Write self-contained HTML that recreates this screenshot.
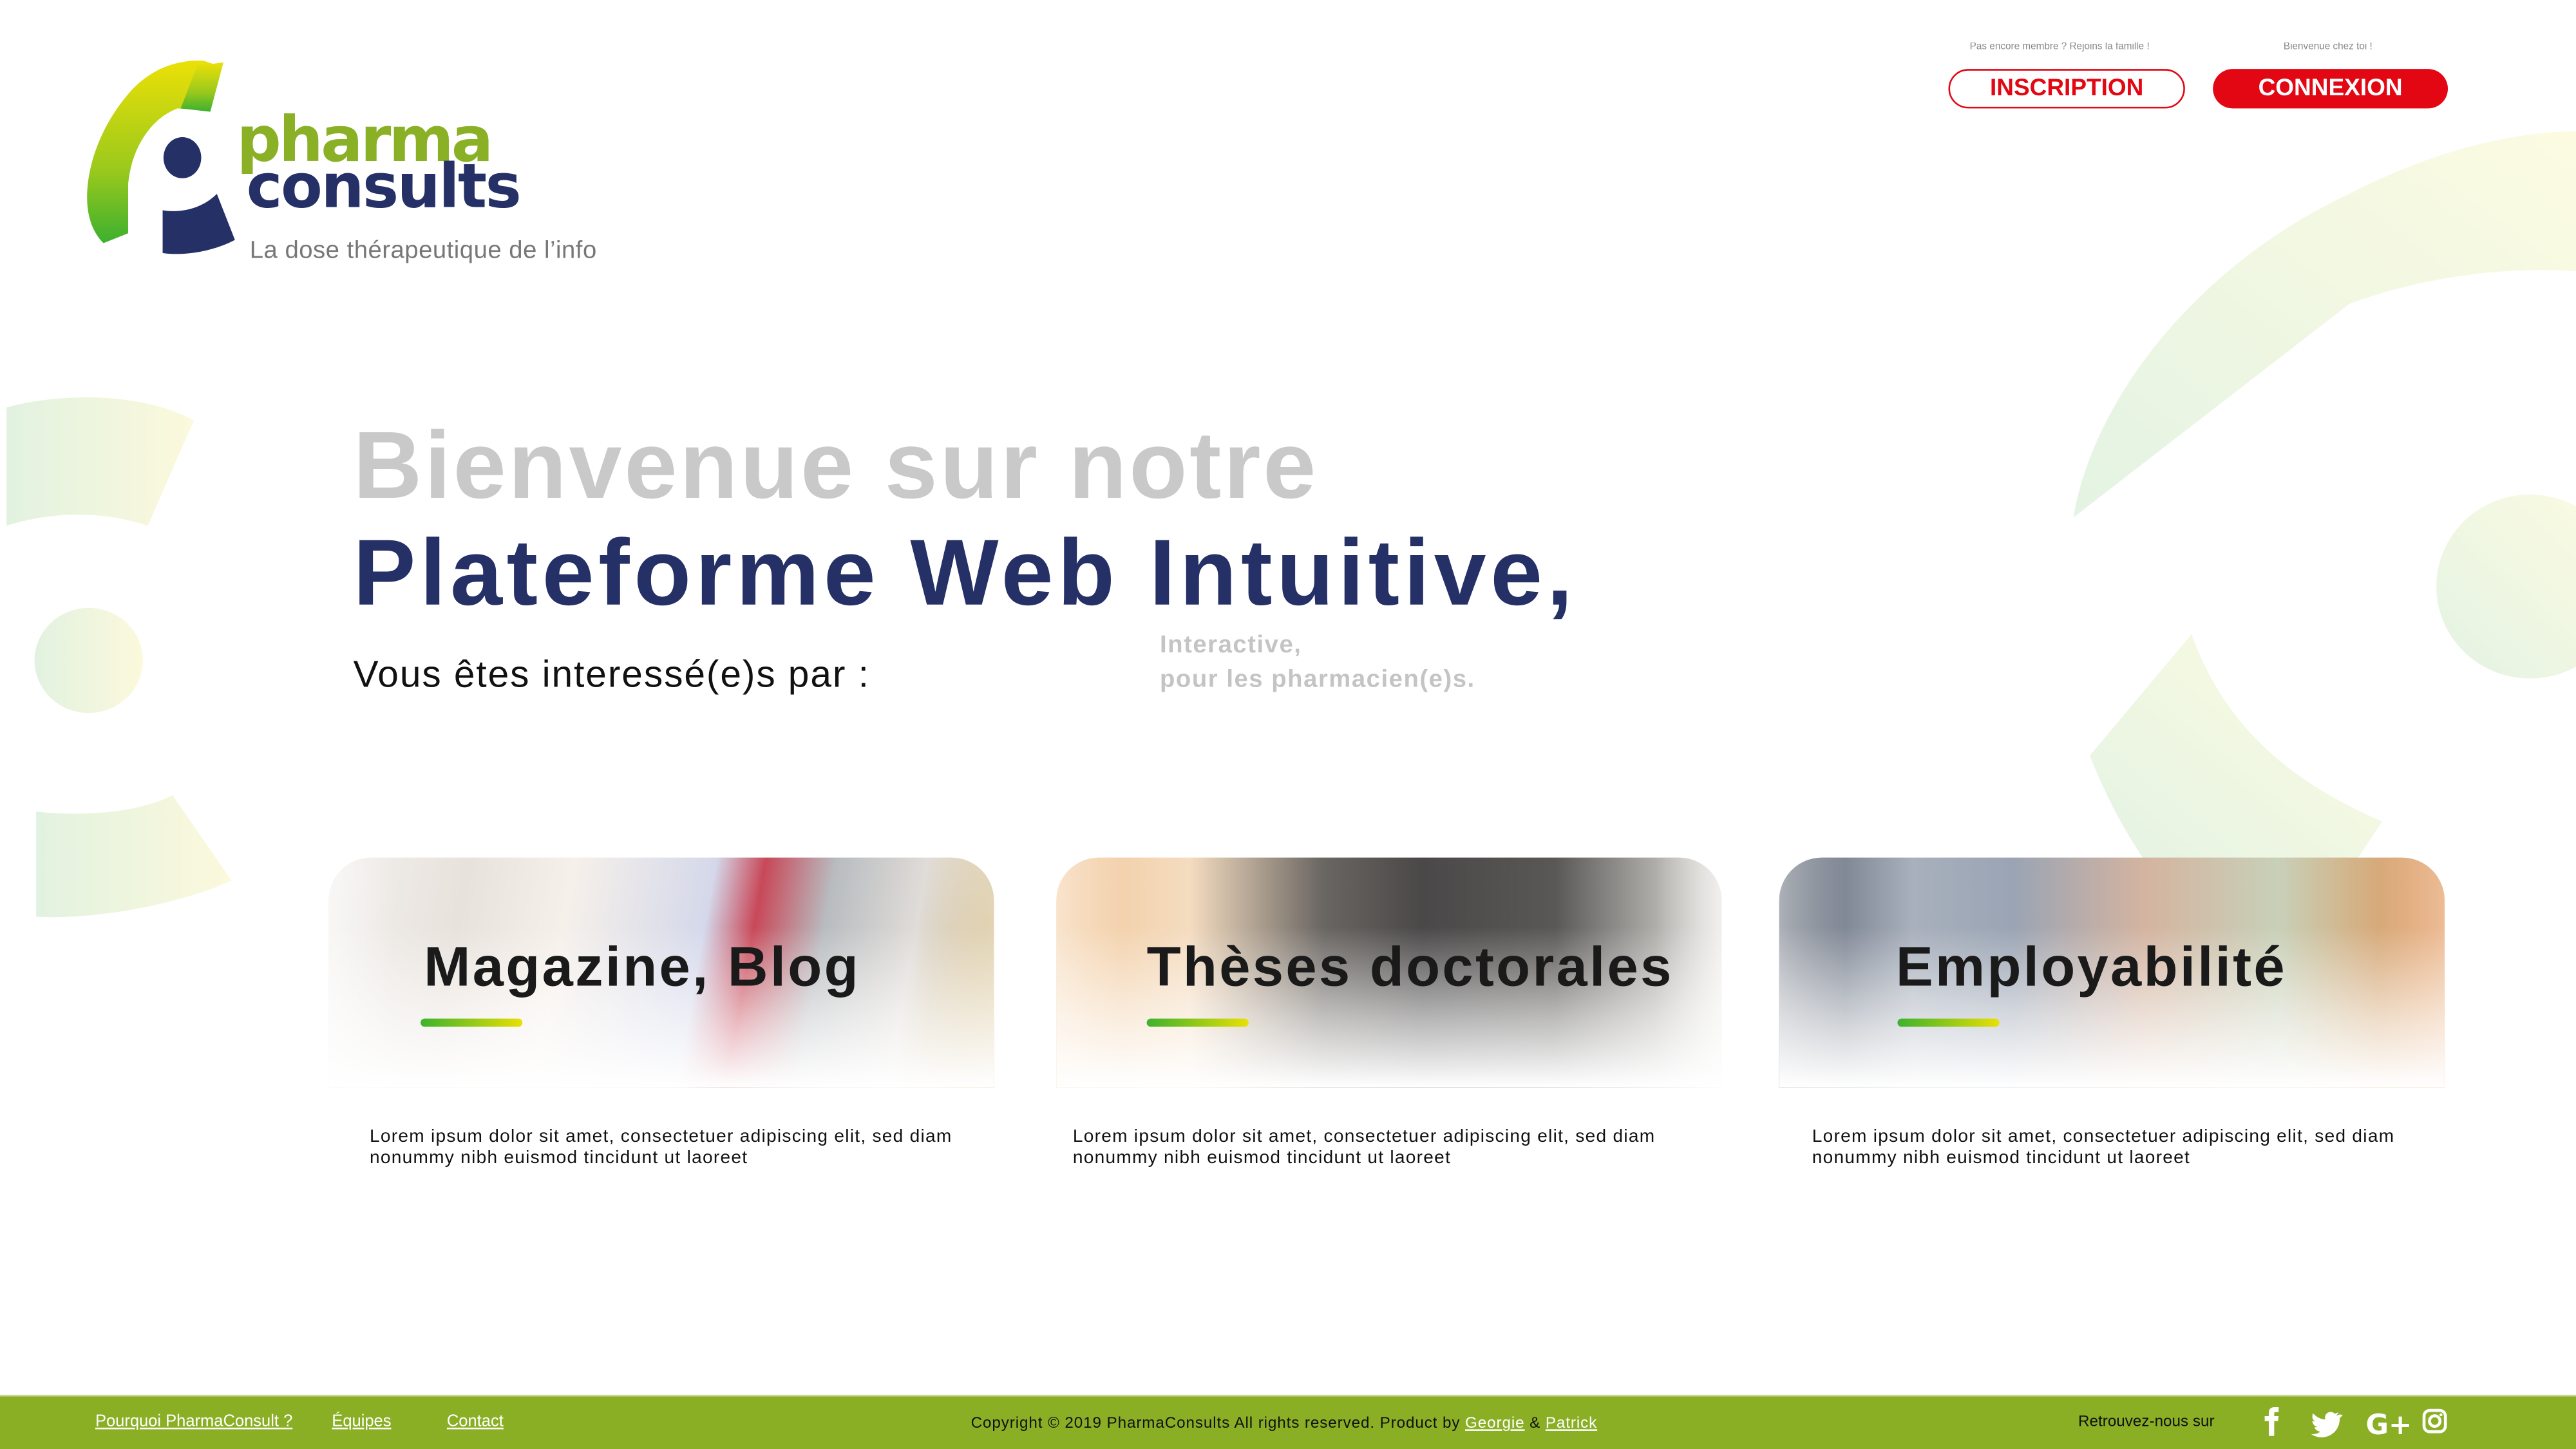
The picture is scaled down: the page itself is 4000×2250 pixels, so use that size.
<!DOCTYPE html>
<html><head><meta charset="utf-8"><style>
*{margin:0;padding:0;box-sizing:border-box}
html,body{width:4000px;height:2250px;overflow:hidden;background:#fff}
#w{position:absolute;left:0;top:0;width:1568px;height:882px;transform:scale(2.55102);transform-origin:0 0;font-family:"Liberation Sans",sans-serif}
.a{position:absolute;white-space:nowrap}
.card{position:absolute;top:522px;width:405px;height:140px;border-radius:26px 26px 0 0;overflow:hidden}
.card .fade{position:absolute;inset:0;background:linear-gradient(180deg,rgba(255,255,255,0) 30%,rgba(255,255,255,.6) 70%,#fff 100%)}
.card .fl{position:absolute;inset:0;background:linear-gradient(90deg,rgba(255,255,255,.5),rgba(255,255,255,0) 10%,rgba(255,255,255,0) 90%,rgba(255,255,255,.4))}
.ct{position:absolute;font-weight:bold;font-size:34px;color:#1a1a1a;top:570px;letter-spacing:1.3px}
.bar{position:absolute;top:620px;width:62px;height:5px;border-radius:3px;background:linear-gradient(90deg,#3db22d,#e8e004)}
.lo{position:absolute;top:686px;font-size:11px;line-height:13px;color:#111;letter-spacing:0.5px}
.fo{color:#fff;text-decoration:underline;font-size:10px;top:860px}
</style></head><body><div id="w">
<svg class="a" style="left:0;top:0" width="1568" height="882">
<defs>
<linearGradient id="bg" x1="0" y1="1" x2="1" y2="0"><stop offset="0" stop-color="#e4f3e3"/><stop offset="1" stop-color="#fcfbe2"/></linearGradient>
<linearGradient id="bh" x1="0" y1="0" x2="1" y2="0"><stop offset="0" stop-color="#e2f2e0"/><stop offset="1" stop-color="#fcf9dc"/></linearGradient>
</defs>
<path d="M1262,315 C1275,240 1340,160 1430,118 C1480,92 1530,80 1568,80 L1568,165 C1520,162 1470,170 1430,185 Z" fill="url(#bg)"/>
<ellipse cx="1540" cy="357" rx="57" ry="56" fill="url(#bg)"/>
<path d="M1272,460 L1334,386 C1350,430 1380,470 1450,500 L1430,530 L1310,530 C1295,510 1282,485 1272,460 Z" fill="url(#bg)"/>
<path d="M4,248 C40,238 90,240 118,256 L90,320 C60,310 30,312 4,320 Z" fill="url(#bh)"/>
<ellipse cx="54" cy="402" rx="33" ry="32" fill="url(#bh)"/>
<path d="M22,494 C60,498 90,492 105,484 L141,536 C110,550 60,560 22,558 Z" fill="url(#bh)"/>
</svg>
<svg class="a" style="left:0;top:0" width="400" height="170">
<defs><linearGradient id="lg2" x1="0" y1="0" x2="0" y2="1"><stop offset="0" stop-color="#ebe007"/><stop offset=".6" stop-color="#9ac91c"/><stop offset="1" stop-color="#3cb02f"/></linearGradient></defs>
<path d="M124,37 C108,36 92,42 80,55 C62,75 53,100 53,120 C53,133 57,142 63,148 L78,142 L78,112 C80,90 92,72 108,66 L124,67 L133,40 Z" fill="url(#lg2)"/>
<path d="M120,40 L136,38 L128,68 L110,66 Z" fill="url(#lg2)"/>
<ellipse cx="111" cy="96" rx="11.5" ry="12.5" fill="#253066"/>
<path d="M99,128 C112,130 124,126 132,118 L143,146 C130,153 112,156 99,154 Z" fill="#253066"/>
<text x="144" y="98" font-family="DejaVu Sans,sans-serif" font-weight="bold" font-size="38" fill="#8ab025" letter-spacing="-1.5">pharma</text>
<text x="150" y="126" font-family="DejaVu Sans,sans-serif" font-weight="bold" font-size="37" fill="#253066" letter-spacing="-1">consults</text>
<text x="152" y="157" font-family="Liberation Sans,sans-serif" font-size="15" fill="#777" letter-spacing="0.2">La dose thérapeutique de l’info</text>
</svg>
<div class="a" style="left:1199px;top:26px;font-size:6px;color:#888">Pas encore membre ? Rejoins la famille !</div>
<div class="a" style="left:1390px;top:26px;font-size:6px;color:#888">Bienvenue chez toi !</div>
<div class="a" style="left:1186px;top:42px;width:144px;height:24px;border:1.5px solid #e30613;border-radius:12px;color:#e30613;font-weight:bold;font-size:14.5px;text-align:center;line-height:22px">INSCRIPTION</div>
<div class="a" style="left:1347px;top:42px;width:143px;height:24px;background:#e30613;border-radius:12px;color:#fff;font-weight:bold;font-size:14.5px;text-align:center;line-height:24px">CONNEXION</div>
<div class="a" style="left:215px;top:250px;font-size:58px;font-weight:bold;color:#c9c9c9;letter-spacing:1.4px">Bienvenue sur notre</div>
<div class="a" style="left:215px;top:316px;font-size:57px;font-weight:bold;color:#253066;letter-spacing:2.6px">Plateforme Web Intuitive,</div>
<div class="a" style="left:215px;top:397px;font-size:23px;color:#111;letter-spacing:0.75px">Vous êtes interessé(e)s par :</div>
<div class="a" style="left:706px;top:382px;font-size:15px;font-weight:bold;color:#c4c4c4;line-height:21px;letter-spacing:0.6px">Interactive,<br>pour les pharmacien(e)s.</div>
<div class="card" style="left:200px;background:linear-gradient(100deg,#f2f0ee 0%,#e8e2dc 20%,#f6f0ea 35%,#d4d8ea 55%,#c84858 62%,#b8bcc0 72%,#e0dcd8 85%,#c8a860 100%)"><div class="fl"></div><div class="fade"></div></div>
<div class="card" style="left:643px;background:linear-gradient(90deg,#f2c89a 0%,#f4dcc0 20%,#6a6662 40%,#4a4848 55%,#5a5856 75%,#e8e6e2 100%)"><div class="fl"></div><div class="fade"></div></div>
<div class="card" style="left:1083px;background:linear-gradient(90deg,#5a6270 0%,#a8b0bc 20%,#9aa4b4 35%,#d4b4a0 55%,#c8d0b8 75%,#e09050 100%)"><div class="fl"></div><div class="fade"></div></div>
<div class="ct" style="left:258px">Magazine, Blog</div>
<div class="ct" style="left:698px">Thèses doctorales</div>
<div class="ct" style="left:1154px">Employabilité</div>
<div class="bar" style="left:256px"></div><div class="bar" style="left:698px"></div><div class="bar" style="left:1155px"></div>
<div class="lo" style="left:225px">Lorem ipsum dolor sit amet, consectetuer adipiscing elit, sed diam<br>nonummy nibh euismod tincidunt ut laoreet</div>
<div class="lo" style="left:653px">Lorem ipsum dolor sit amet, consectetuer adipiscing elit, sed diam<br>nonummy nibh euismod tincidunt ut laoreet</div>
<div class="lo" style="left:1103px">Lorem ipsum dolor sit amet, consectetuer adipiscing elit, sed diam<br>nonummy nibh euismod tincidunt ut laoreet</div>
<div class="a" style="left:0;top:849px;width:1568px;height:1px;background:#c9d99a"></div>
<div class="a" style="left:0;top:850px;width:1568px;height:32px;background:#8aaf25"></div>
<div class="a fo" style="left:58px">Pourquoi PharmaConsult ?</div>
<div class="a fo" style="left:202px">Équipes</div>
<div class="a fo" style="left:272px">Contact</div>
<div class="a" style="left:591px;top:861px;font-size:9.5px;color:#111;letter-spacing:0.35px">Copyright ©  2019 PharmaConsults  All rights reserved.  Product by <u style="color:#fff">Georgie</u> &amp; <u style="color:#fff">Patrick</u></div>
<div class="a" style="left:1265px;top:860px;font-size:9.5px;color:#111">Retrouvez-nous sur</div>
<svg class="a" style="left:1370px;top:850px" width="130" height="32">
<path d="M11,24 V15 H8.5 V12 H11 V10 C11,7.5 12.5,6.5 14.5,6.5 H17 V9.5 H15.2 C14.5,9.5 14.3,9.9 14.3,10.5 V12 H17 L16.6,15 H14.3 V24 Z" fill="#fff"/>
<path d="M54,10 C53.3,10.3 52.6,10.5 51.9,10.6 C52.6,10.1 53.2,9.4 53.4,8.6 C52.7,9 51.9,9.3 51.1,9.5 C49.6,7.9 46.8,8.2 45.7,10.1 C45.2,11 45.1,12 45.4,13 C42.5,12.9 39.8,11.5 38,9.3 C37,11 37.5,13.2 39.2,14.3 C38.6,14.3 38,14.1 37.5,13.8 C37.5,15.6 38.8,17.2 40.6,17.6 C40,17.8 39.4,17.8 38.8,17.7 C39.3,19.3 40.7,20.3 42.4,20.4 C40.8,21.6 38.8,22.2 36.8,22 C44.5,26.9 54.4,21.9 54.2,12.1 C54.9,11.6 55.5,10.9 56,10.2 Z" fill="#fff" transform="translate(0,1)"/>
<text x="70" y="23" font-family="DejaVu Sans,sans-serif" font-weight="bold" font-size="17" fill="#fff">G+</text>
<rect x="105.5" y="8.5" width="13" height="13" rx="3.5" fill="none" stroke="#fff" stroke-width="1.8"/>
<circle cx="112" cy="15" r="3.2" fill="none" stroke="#fff" stroke-width="1.8"/>
<circle cx="115.8" cy="11.2" r="0.9" fill="#fff"/>
</svg>
</div></body></html>
